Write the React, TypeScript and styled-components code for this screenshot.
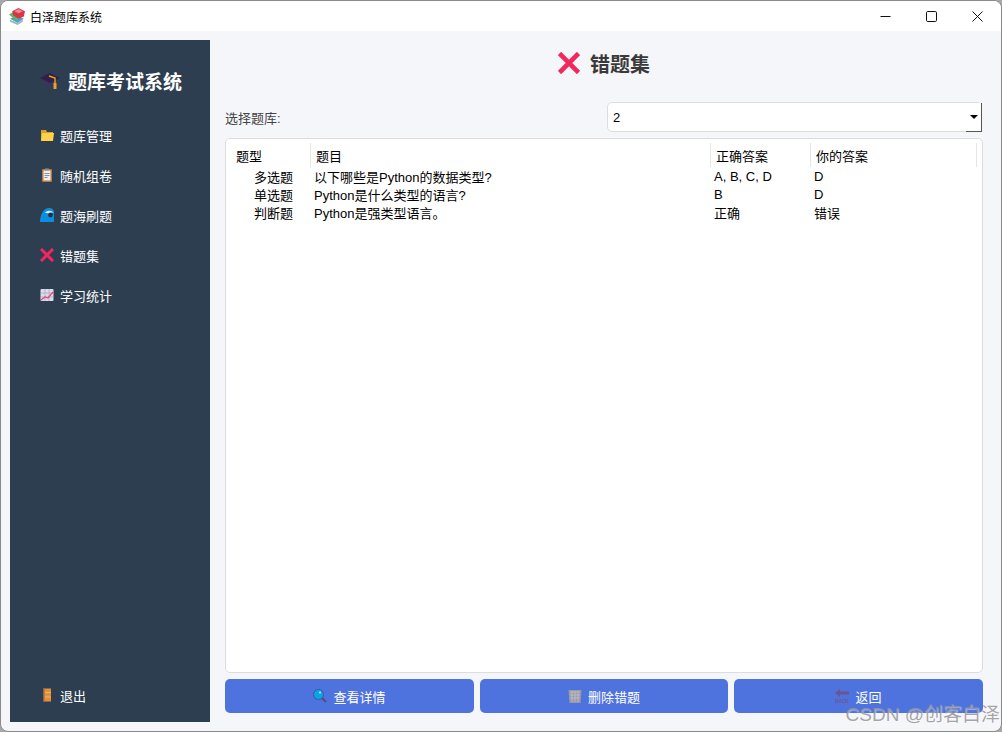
import React from "react";
import styled, { createGlobalStyle } from "styled-components";

const UI_FONT = `"Liberation Sans", "Noto Sans CJK SC", sans-serif`;
const TITLE_FONT = `"Liberation Serif", "Noto Sans CJK SC", serif`;

const Global = createGlobalStyle`
  html, body {
    margin: 0;
    padding: 0;
    background: #a8a8a8;
  }
  * {
    box-sizing: border-box;
  }
`;

const BooksIcon = () => (
  <svg width="17" height="17" viewBox="0 0 16 16">
    <path d="M1 10l6-3 7 3-6 4z" fill="#4aa3d8" />
    <path d="M1 11l7 3 5-3v2l-5 3-7-3z" fill="#9fb8b0" />
    <path d="M0 6l5-3 7 5-5 4z" fill="#5cb85c" />
    <path d="M3 3l6-3 6 3-1 5-5 2-5-3z" fill="#d9344a" />
    <path d="M5 3l4-2 4 2-4 2z" fill="#f08a92" />
  </svg>
);

const CapIcon = () => (
  <svg width="20" height="18" viewBox="0 0 20 18">
    <path d="M0 7l10-5 10 5-10 5z" fill="#2f2148" />
    <path d="M4 10v3l6 2 6-2v-3l-6 3z" fill="#4b2a6b" />
    <path d="M9 5l6 2v7" stroke="#f0a020" strokeWidth="1.400" fill="none" />
    <rect x="13.500" y="12" width="3" height="6" fill="#f0a020" />
  </svg>
);

const FolderIcon = () => (
  <svg width="14" height="14" viewBox="0 0 14 14">
    <path d="M1 2h5l1 2h6v8H1z" fill="#e0a030" />
    <path d="M2 5h12l-1 8H1z" fill="#ffd24a" />
  </svg>
);

const ClipboardIcon = () => (
  <svg width="14" height="14" viewBox="0 0 14 14">
    <rect x="2" y="1" width="10" height="13" rx="1" fill="#b8763e" />
    <rect x="3.500" y="2.500" width="7" height="10" fill="#eceff3" />
    <rect x="5" y="0.500" width="4" height="2" fill="#8a8f96" />
    <path d="M4.500 5.500h5M4.500 7.500h5M4.500 9.500h3" stroke="#8a8f96" strokeWidth="1" />
  </svg>
);

const WaveIcon = () => (
  <svg width="14" height="14" viewBox="0 0 14 14">
    <path d="M0 14C0 6 4 0 9 0c3 0 5 2 5 4v10z" fill="#0a8fe0" />
    <path d="M5 5c2-3 6-3 9 0-2-1-4 0-4 2-1-2-3-2-5-2z" fill="#dfeef7" />
    <circle cx="10.500" cy="7" r="2.400" fill="#22303f" />
  </svg>
);

const CrossIcon = ({ size }: { size: number }) => (
  <svg width={size} height={size} viewBox="0 0 14 14">
    <path d="M2 2l10 10M12 2L2 12" stroke="#f4265e" strokeWidth="3" strokeLinecap="square" />
  </svg>
);

const ChartIcon = () => (
  <svg width="14" height="14" viewBox="0 0 14 14">
    <rect x="0.500" y="1" width="13" height="12" rx="1" fill="#dcdce8" />
    <path d="M1 5h12M1 9h12M5 1v12M9 1v12" stroke="#a9a9bd" strokeWidth="0.800" />
    <path d="M1 12l4-3 3 1 5-6" stroke="#e8437a" strokeWidth="1.200" fill="none" />
  </svg>
);

const DoorIcon = () => (
  <svg width="14" height="14" viewBox="0 0 14 14">
    <rect x="3" y="0.500" width="8" height="13" fill="#e58f35" />
    <rect x="3" y="0.500" width="1.400" height="13" fill="#7b6a55" />
    <path d="M5 4.500h6M5 9h6" stroke="#f4b26a" strokeWidth="1" />
  </svg>
);

const SearchIcon = () => (
  <svg width="14" height="14" viewBox="0 0 14 14">
    <path d="M8 8l5 5" stroke="#5b4a8a" strokeWidth="2.400" />
    <circle cx="5.500" cy="5.500" r="5" fill="#0aa4e8" stroke="#3d5a8a" strokeWidth="1" />
    <circle cx="7" cy="3.500" r="1" fill="#c6eefc" />
  </svg>
);

const TrashIcon = () => (
  <svg width="14" height="14" viewBox="0 0 14 14">
    <path d="M0.500 1h13l-1 13H1.500z" fill="#9a9aa6" />
    <path d="M2 3h10M2 6h10M2 9h10M4 2v11M7 2v11M10 2v11" stroke="#c5c5d2" strokeWidth="0.700" />
  </svg>
);

const BackIcon = () => (
  <svg width="14" height="14" viewBox="0 0 14 14">
    <path d="M0 4l5-4v2.500h9v3H5V8z" fill="#6a5590" />
    <text x="7" y="13.500" textAnchor="middle" fontSize="4.600" fontWeight="700" fill="#6a5590">
      BACK
    </text>
  </svg>
);

const menu = [
  { label: "题库管理", icon: <FolderIcon /> },
  { label: "随机组卷", icon: <ClipboardIcon /> },
  { label: "题海刷题", icon: <WaveIcon /> },
  { label: "错题集", icon: <CrossIcon size={14} /> },
  { label: "学习统计", icon: <ChartIcon /> },
];

const rows = [
  { type: "多选题", title: "以下哪些是Python的数据类型?", right: "A, B, C, D", mine: "D" },
  { type: "单选题", title: "Python是什么类型的语言?", right: "B", mine: "D" },
  { type: "判断题", title: "Python是强类型语言。", right: "正确", mine: "错误" },
];

export default function App() {
  return (
    <>
      <Global />
      <Window>
        <TitleBar>
          <AppTitle>
            <BooksIcon />
            <span>白泽题库系统</span>
          </AppTitle>
          <WinButtons>
            <WinButton>
              <svg width="11" height="11" viewBox="0 0 11 11">
                <path d="M0.500 5.500h10" stroke="#111" strokeWidth="1" />
              </svg>
            </WinButton>
            <WinButton>
              <svg width="11" height="11" viewBox="0 0 11 11">
                <rect x="0.500" y="0.500" width="10" height="10" rx="1.200" fill="none" stroke="#111" strokeWidth="1" />
              </svg>
            </WinButton>
            <WinButton>
              <svg width="11" height="11" viewBox="0 0 11 11">
                <path d="M0.500 0.500l10 10M10.500 0.500l-10 10" stroke="#111" strokeWidth="1" />
              </svg>
            </WinButton>
          </WinButtons>
        </TitleBar>
        <Body>
          <Sidebar>
            <Brand>
              <CapIcon />
              <BrandText>题库考试系统</BrandText>
            </Brand>
            <Menu>
              {menu.map((m) => (
                <MenuItem key={m.label}>
                  <IconSlot>{m.icon}</IconSlot>
                  {m.label}
                </MenuItem>
              ))}
            </Menu>
            <MenuItem>
              <IconSlot>
                <DoorIcon />
              </IconSlot>
              退出
            </MenuItem>
          </Sidebar>
          <Main>
            <Heading>
              <CrossIcon size={22} />
              <HeadingText>错题集</HeadingText>
            </Heading>
            <SelectRow>
              <SelectLabel>选择题库:</SelectLabel>
              <Select>
                2
                <Arrow>
                  <ArrowGlyph />
                </Arrow>
              </Select>
            </SelectRow>
            <Panel>
              <HeaderRow>
                <HeaderCell>题型</HeaderCell>
                <HeaderCell>题目</HeaderCell>
                <HeaderCell>正确答案</HeaderCell>
                <HeaderCell>你的答案</HeaderCell>
              </HeaderRow>
              {rows.map((r) => (
                <Row key={r.type}>
                  <TypeCell>{r.type}</TypeCell>
                  <Cell>{r.title}</Cell>
                  <Cell>{r.right}</Cell>
                  <Cell>{r.mine}</Cell>
                </Row>
              ))}
            </Panel>
            <Actions>
              <ActionButton>
                <SearchIcon />
                查看详情
              </ActionButton>
              <ActionButton>
                <TrashIcon />
                删除错题
              </ActionButton>
              <ActionButton>
                <BackIcon />
                返回
              </ActionButton>
            </Actions>
          </Main>
        </Body>
        <Watermark>CSDN @创客白泽</Watermark>
      </Window>
    </>
  );
}

const Window = styled.div`
  position: relative;
  width: 1002px;
  height: 732px;
  display: flex;
  flex-direction: column;
  background: #f5f6fa;
  border: 1px solid #8a8a8a;
  border-radius: 8px;
  overflow: hidden;
  font-family: ${UI_FONT};
`;

const TitleBar = styled.div`
  height: 30px;
  flex: none;
  display: flex;
  align-items: center;
  justify-content: space-between;
  background: #ffffff;
  padding-left: 8px;
`;

const AppTitle = styled.div`
  display: flex;
  align-items: center;
  gap: 4px;
  font-size: 12px;
  color: #000;
`;

const WinButtons = styled.div`
  display: flex;
  padding-right: 1px;
`;

const WinButton = styled.div`
  width: 46px;
  height: 30px;
  display: flex;
  align-items: center;
  justify-content: center;
`;

const Body = styled.div`
  flex: 1;
  min-height: 0;
  display: flex;
  gap: 15px;
  padding: 9px 18px 9px 9px;
`;

const Sidebar = styled.div`
  width: 200px;
  flex: none;
  display: flex;
  flex-direction: column;
  background: #2c3e50;
  padding: 0 0 7px 30px;
`;

const Brand = styled.div`
  height: 42px;
  margin-top: 19px;
  display: flex;
  align-items: center;
  gap: 8px;
`;

const BrandText = styled.div`
  font-family: ${TITLE_FONT};
  font-size: 19px;
  font-weight: 700;
  color: #fff;
`;

const Menu = styled.div`
  flex: 1;
  margin-top: 14px;
  display: flex;
  flex-direction: column;
`;

const MenuItem = styled.div`
  height: 40px;
  flex: none;
  display: flex;
  align-items: center;
  gap: 5px;
  font-size: 13px;
  color: #fff;
`;

const IconSlot = styled.span`
  width: 15px;
  height: 14px;
  display: flex;
  align-items: center;
`;

const Main = styled.div`
  width: 758px;
  flex: none;
  display: flex;
  flex-direction: column;
  padding-bottom: 9px;
`;

const Heading = styled.div`
  height: 46px;
  flex: none;
  display: flex;
  align-items: center;
  justify-content: center;
  gap: 10px;
`;

const HeadingText = styled.div`
  font-family: ${TITLE_FONT};
  font-size: 20px;
  font-weight: 700;
  color: #3a3a3a;
`;

const SelectRow = styled.div`
  margin-top: 16px;
  height: 30px;
  flex: none;
  display: flex;
  align-items: center;
  justify-content: space-between;
`;

const SelectLabel = styled.div`
  font-size: 13px;
  color: #444;
`;

const Select = styled.div`
  position: relative;
  width: 375px;
  height: 30px;
  margin-right: 1px;
  display: flex;
  align-items: center;
  padding-left: 5px;
  background: #fff;
  border: 1px solid #dcdde1;
  border-radius: 5px;
  font-size: 13px;
  color: #000;
`;

const Arrow = styled.div`
  position: absolute;
  top: 0;
  right: -1px;
  bottom: -1px;
  width: 16px;
  display: flex;
  align-items: center;
  justify-content: center;
  border-right: 1px solid #555;
  border-bottom: 1px solid #555;
  background: #fff;
`;

const ArrowGlyph = styled.span`
  width: 0;
  height: 0;
  border-left: 4px solid transparent;
  border-right: 4px solid transparent;
  border-top: 4px solid #000;
`;

const Panel = styled.div`
  margin-top: 6px;
  flex: 1;
  min-height: 0;
  padding: 4px 6px 0 0;
  background: #fff;
  border: 1px solid #dcdde1;
  border-radius: 5px;
`;

const HeaderRow = styled.div`
  height: 24px;
  display: grid;
  grid-template-columns: 85px 400px 100px 166px;
`;

const HeaderCell = styled.div`
  display: flex;
  align-items: center;
  padding-left: 5px;
  font-size: 13px;
  color: #000;
  border-right: 1px solid #e6e6e6;
  &:first-child {
    padding-left: 10px;
  }
`;

const Row = styled.div`
  height: 18px;
  display: grid;
  grid-template-columns: 85px 400px 100px 166px;
  align-items: center;
  font-size: 13px;
  color: #000;
`;

const Cell = styled.div`
  padding-left: 3px;
  white-space: nowrap;
`;

const TypeCell = styled.div`
  padding-right: 18px;
  text-align: right;
`;

const Actions = styled.div`
  margin-top: 6px;
  flex: none;
  display: grid;
  grid-template-columns: 249px 248px 249px;
  gap: 6px;
`;

const ActionButton = styled.div`
  height: 34px;
  display: flex;
  align-items: center;
  justify-content: center;
  gap: 6px;
  background: #4e73df;
  border-radius: 5px;
  font-size: 13px;
  color: #fff;
`;

const Watermark = styled.div`
  position: absolute;
  right: 1px;
  bottom: 5px;
  font-size: 19px;
  color: rgba(150, 150, 150, 0.85);
  text-shadow: 1px 1px 1px rgba(255, 255, 255, 0.45);
  white-space: nowrap;
`;
